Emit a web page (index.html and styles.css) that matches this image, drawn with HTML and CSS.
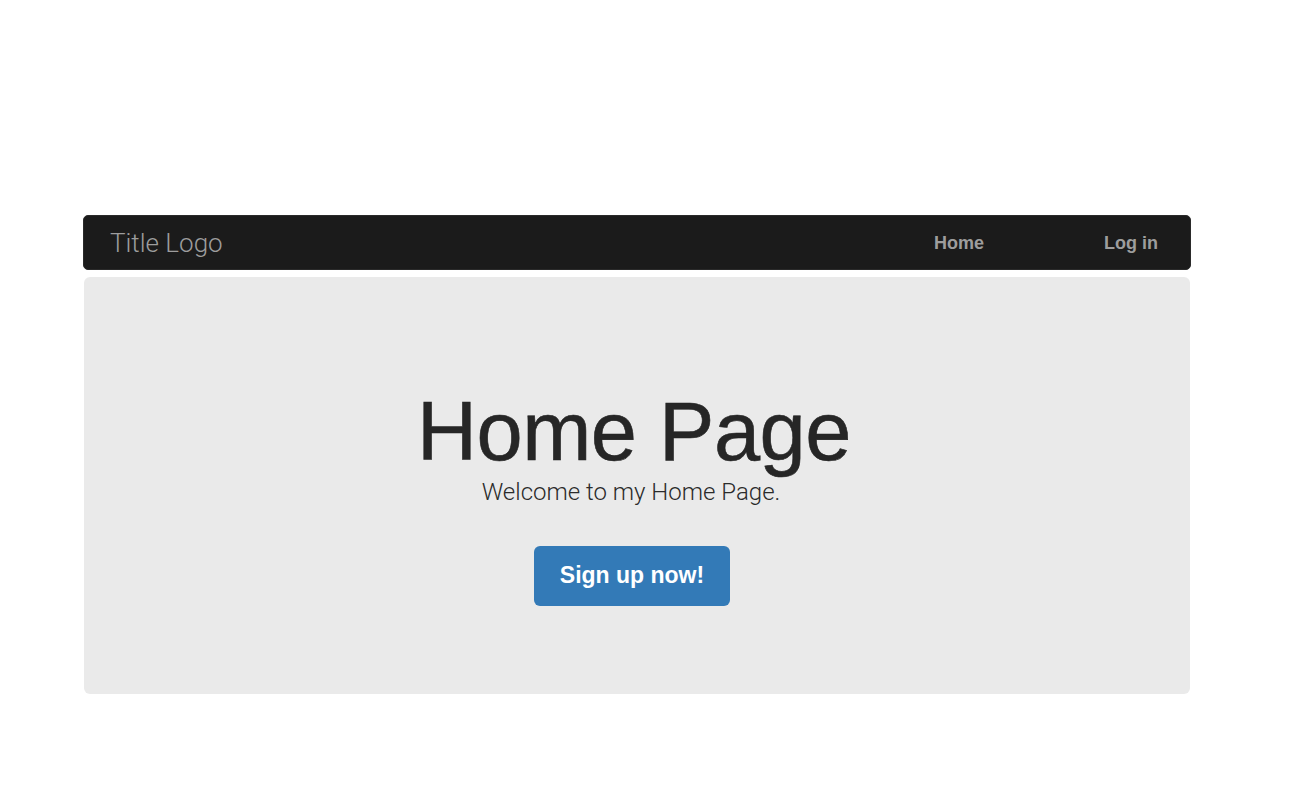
FILE: index.html
```html
<!DOCTYPE html>
<html>
<head>
<meta charset="utf-8">
<title>Home Page</title>
<link rel="stylesheet" href="styles.css">
</head>
<body>
<div class="container">
  <nav class="navbar">
    <a class="brand" href="#">Title Logo</a>
    <ul class="nav">
      <li><a href="#">Home</a></li>
      <li><a href="#">Log in</a></li>
    </ul>
  </nav>
  <section class="jumbotron">
    <h1 class="title">Home Page</h1>
    <p class="lead">Welcome to my Home Page.</p>
    <a class="btn" href="#">Sign up now!</a>
  </section>
</div>
</body>
</html>
```
FILE: styles.css
```css
html, body {
  margin: 0;
  padding: 0;
  background: #ffffff;
}
body {
  font-family: "Liberation Sans", Arial, sans-serif;
}
.container {
  width: 1108px;
  margin-left: 83px;
  padding-top: 215px;
}
.navbar {
  box-sizing: border-box;
  height: 55px;
  background: #1b1b1b;
  border: 1px solid #2a2a2a;
  border-radius: 5px;
  display: flex;
  align-items: center;
  justify-content: space-between;
  padding: 0 32px 0 26px;
}
.brand {
  font-family: Roboto, "Liberation Sans", sans-serif;
  font-weight: 300;
  font-size: 26px;
  color: #9d9d9d;
  text-decoration: none;
  line-height: 1;
  padding-top: 1px;
}
.nav {
  list-style: none;
  margin: 0;
  padding: 2px 0 0;
  display: flex;
  gap: 120px;
}
.nav a {
  font-weight: bold;
  font-size: 18px;
  color: #9d9d9d;
  text-decoration: none;
  line-height: 1;
}
.jumbotron {
  margin: 7px 1px 0;
  background: #eaeaea;
  border-radius: 6px;
  padding: 113px 0 88px;
  display: flex;
  flex-direction: column;
  align-items: center;
}
.title {
  margin: 0 0 0 -6px;
  font-weight: normal;
  font-size: 83px;
  line-height: 1;
  color: #262626;
  letter-spacing: -0.5px;
  -webkit-text-stroke: 0.6px #262626;
}
.lead {
  margin: 5px 0 0 -12px;
  font-family: Roboto, "Liberation Sans", sans-serif;
  font-weight: 300;
  font-size: 24px;
  line-height: 1.2;
  color: #2b2b2b;
}
.btn {
  margin-top: 39px;
  margin-left: -10px;
  box-sizing: border-box;
  width: 196px;
  height: 60px;
  background: #337ab7;
  border-radius: 6px;
  color: #ffffff;
  font-weight: bold;
  font-size: 23px;
  text-decoration: none;
  display: flex;
  align-items: center;
  justify-content: center;
}
```
